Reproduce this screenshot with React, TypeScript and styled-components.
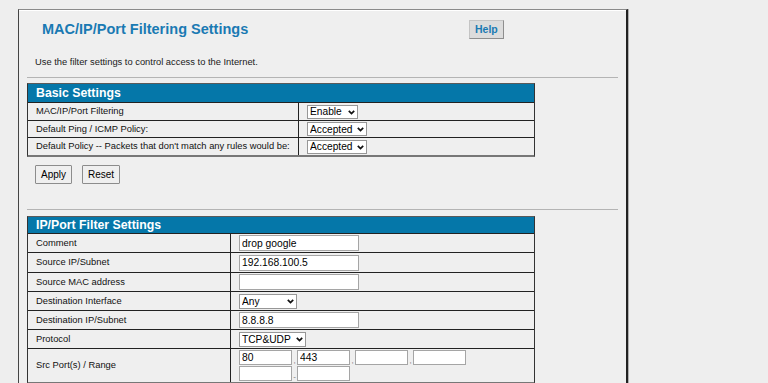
import React from "react";
import styled, { createGlobalStyle } from "styled-components";

const GlobalStyle = createGlobalStyle`
  html, body {
    margin: 0;
    padding: 0;
    background: #eeeeee;
  }
  body {
    padding: 9px 0 0 18px;
    font-family: "Liberation Sans", Arial, sans-serif;
    color: #222;
  }
`;

const Panel = styled.div`
  width: 610px;
  box-sizing: border-box;
  background: #efefef;
  border-top: 1px solid #8a8a8a;
  border-left: 1px solid #444;
  border-right: 2px solid #222;
  box-shadow: inset 0 1px 0 #fff, 1px 0 0 #b0b0b0;
  padding: 0 8px 40px;
`;

const HeaderRow = styled.div`
  display: grid;
  grid-template-columns: 427px auto;
  align-items: center;
  height: 20px;
  margin-top: 9px;
  padding-left: 15px;
`;

const Title = styled.h1`
  margin: 0;
  font-size: 14.5px;
  line-height: 20px;
  font-weight: 700;
  color: #1a7ab3;
`;

const HelpButton = styled.button`
  justify-self: start;
  height: 19px;
  padding: 0 5px;
  border: 1px solid;
  border-color: #c4c4c4 #8e8e8e #8e8e8e #c4c4c4;
  background: #dcdcdc;
  color: #1a7ab3;
  font-family: "Liberation Sans", Arial, sans-serif;
  font-size: 10.5px;
  font-weight: 700;
  cursor: pointer;
`;

const Description = styled.p`
  margin: 17px 0 0 8px;
  font-size: 9.35px;
  line-height: 13px;
  color: #1a1a1a;
`;

const Divider = styled.hr<{ $top: number }>`
  margin: ${(p) => p.$top}px 0 0;
  height: 0;
  border: 0;
  border-top: 1px solid #b4b4b4;
`;

const TableFrame = styled.div<{ $top: number }>`
  width: 508px;
  box-sizing: border-box;
  margin-top: ${(p) => p.$top}px;
  border: 1px solid #333;
  border-top-color: #5a5a5a;
  border-bottom: 2px solid #777;
`;

const TableHeader = styled.div<{ $h: number }>`
  display: flex;
  align-items: center;
  height: ${(p) => p.$h}px;
  padding-left: 8px;
  background: #0577a9;
  color: #fff;
  font-size: 12.3px;
  font-weight: 700;
`;

const Row = styled.div<{ $label: number }>`
  display: grid;
  grid-template-columns: ${(p) => p.$label}px 1fr;
  border-top: 1px solid #222;
`;

const LabelCell = styled.div`
  display: flex;
  align-items: center;
  padding: 0 8px;
  font-size: 9.35px;
  color: #111;
`;

const ValueCell = styled.div`
  display: flex;
  flex-direction: column;
  justify-content: center;
  align-items: flex-start;
  gap: 1px;
  border-left: 1px solid #222;
  padding: 1.5px 8px 1px;
`;

const SelectWrap = styled.span<{ $w: number; $h: number }>`
  position: relative;
  display: inline-block;
  width: ${(p) => p.$w}px;
  height: ${(p) => p.$h}px;
`;

const NativeSelect = styled.select`
  appearance: none;
  display: block;
  width: 100%;
  height: 100%;
  box-sizing: border-box;
  margin: 0;
  padding: 0 10px 0 2px;
  border: 1px solid #979797;
  border-radius: 0;
  background: #fff;
  color: #000;
  font-family: "Liberation Sans", Arial, sans-serif;
  font-size: 10.2px;
  outline: none;
`;

const Chevron = styled.svg`
  position: absolute;
  right: 3px;
  top: 50%;
  margin-top: -2px;
  pointer-events: none;
`;

const TextInput = styled.input<{ $w: number; $h?: number }>`
  width: ${(p) => p.$w}px;
  height: ${(p) => p.$h ?? 16}px;
  box-sizing: border-box;
  margin: 0;
  padding: 0 2px;
  border: 1px solid #a5a5a5;
  border-radius: 0;
  background: #fff;
  color: #000;
  font-family: "Liberation Sans", Arial, sans-serif;
  font-size: 10.3px;
  outline: none;
`;

const PortLine = styled.div`
  display: flex;
  align-items: flex-end;
`;

const PortSep = styled.span`
  width: 5px;
  text-align: center;
  font-size: 8px;
  line-height: 8px;
  color: #777;
`;

const ActionBar = styled.div`
  display: flex;
  gap: 10px;
  margin-top: 8px;
  padding-left: 8px;
`;

const FormButton = styled.button`
  height: 19px;
  padding: 0 5px;
  border: 1px solid #8c8c8c;
  border-radius: 1px;
  background: #efefef;
  color: #000;
  font-family: "Liberation Sans", Arial, sans-serif;
  font-size: 10px;
  cursor: pointer;
`;

const Select: React.FC<{ w: number; h?: number; value: string; options: string[] }> = ({
  w,
  h = 15,
  value,
  options,
}) => (
  <SelectWrap $w={w} $h={h}>
    <NativeSelect defaultValue={value}>
      {options.map((o) => (
        <option key={o}>{o}</option>
      ))}
    </NativeSelect>
    <Chevron width="7" height="5" viewBox="0 0 7 5">
      <path d="M0.8 0.8 L3.5 3.6 L6.2 0.8" fill="none" stroke="#111" strokeWidth="1.7" />
    </Chevron>
  </SelectWrap>
);

const PortInputs: React.FC<{ values: string[] }> = ({ values }) => (
  <>
    <PortLine>
      <TextInput $w={53} $h={15} defaultValue={values[0]} />
      <PortSep>,</PortSep>
      <TextInput $w={53} $h={15} defaultValue={values[1]} />
      <PortSep>,</PortSep>
      <TextInput $w={53} $h={15} defaultValue={values[2]} />
      <PortSep>,</PortSep>
      <TextInput $w={53} $h={15} defaultValue={values[3]} />
    </PortLine>
    <PortLine>
      <TextInput $w={53} $h={15} defaultValue={values[4]} />
      <PortSep>-</PortSep>
      <TextInput $w={53} $h={15} defaultValue={values[5]} />
    </PortLine>
  </>
);

const basicRows = [
  { label: "MAC/IP/Port Filtering", w: 51, value: "Enable", options: ["Disable", "Enable"] },
  { label: "Default Ping / ICMP Policy:", w: 60, value: "Accepted", options: ["Dropped", "Accepted"] },
  {
    label: "Default Policy -- Packets that don't match any rules would be:",
    w: 60,
    value: "Accepted",
    options: ["Dropped", "Accepted"],
  },
];

const App: React.FC = () => {
  return (
    <>
      <GlobalStyle />
      <Panel>
        <HeaderRow>
          <Title>MAC/IP/Port Filtering Settings</Title>
          <HelpButton>Help</HelpButton>
        </HeaderRow>
        <Description>Use the filter settings to control access to the Internet.</Description>
        <Divider $top={8} />

        <TableFrame $top={5}>
          <TableHeader $h={18}>Basic Settings</TableHeader>
          {basicRows.map((r) => (
            <Row key={r.label} $label={270}>
              <LabelCell>{r.label}</LabelCell>
              <ValueCell>
                <Select w={r.w} h={14} value={r.value} options={r.options} />
              </ValueCell>
            </Row>
          ))}
        </TableFrame>

        <ActionBar>
          <FormButton>Apply</FormButton>
          <FormButton>Reset</FormButton>
        </ActionBar>

        <Divider $top={25} />

        <TableFrame $top={6}>
          <TableHeader $h={16}>IP/Port Filter Settings</TableHeader>
          <Row $label={202}>
            <LabelCell>Comment</LabelCell>
            <ValueCell>
              <TextInput $w={120} defaultValue="drop google" />
            </ValueCell>
          </Row>
          <Row $label={202}>
            <LabelCell>Source IP/Subnet</LabelCell>
            <ValueCell>
              <TextInput $w={120} defaultValue="192.168.100.5" />
            </ValueCell>
          </Row>
          <Row $label={202}>
            <LabelCell>Source MAC address</LabelCell>
            <ValueCell>
              <TextInput $w={120} defaultValue="" />
            </ValueCell>
          </Row>
          <Row $label={202}>
            <LabelCell>Destination Interface</LabelCell>
            <ValueCell>
              <Select w={58} value="Any" options={["Any", "LAN", "WAN"]} />
            </ValueCell>
          </Row>
          <Row $label={202}>
            <LabelCell>Destination IP/Subnet</LabelCell>
            <ValueCell>
              <TextInput $w={120} defaultValue="8.8.8.8" />
            </ValueCell>
          </Row>
          <Row $label={202}>
            <LabelCell>Protocol</LabelCell>
            <ValueCell>
              <Select w={67} value="TCP&UDP" options={["None", "TCP", "UDP", "TCP&UDP", "ICMP"]} />
            </ValueCell>
          </Row>
          <Row $label={202}>
            <LabelCell>Src Port(s) / Range</LabelCell>
            <ValueCell>
              <PortInputs values={["80", "443", "", "", "", ""]} />
            </ValueCell>
          </Row>
        </TableFrame>
      </Panel>
    </>
  );
};

export default App;
